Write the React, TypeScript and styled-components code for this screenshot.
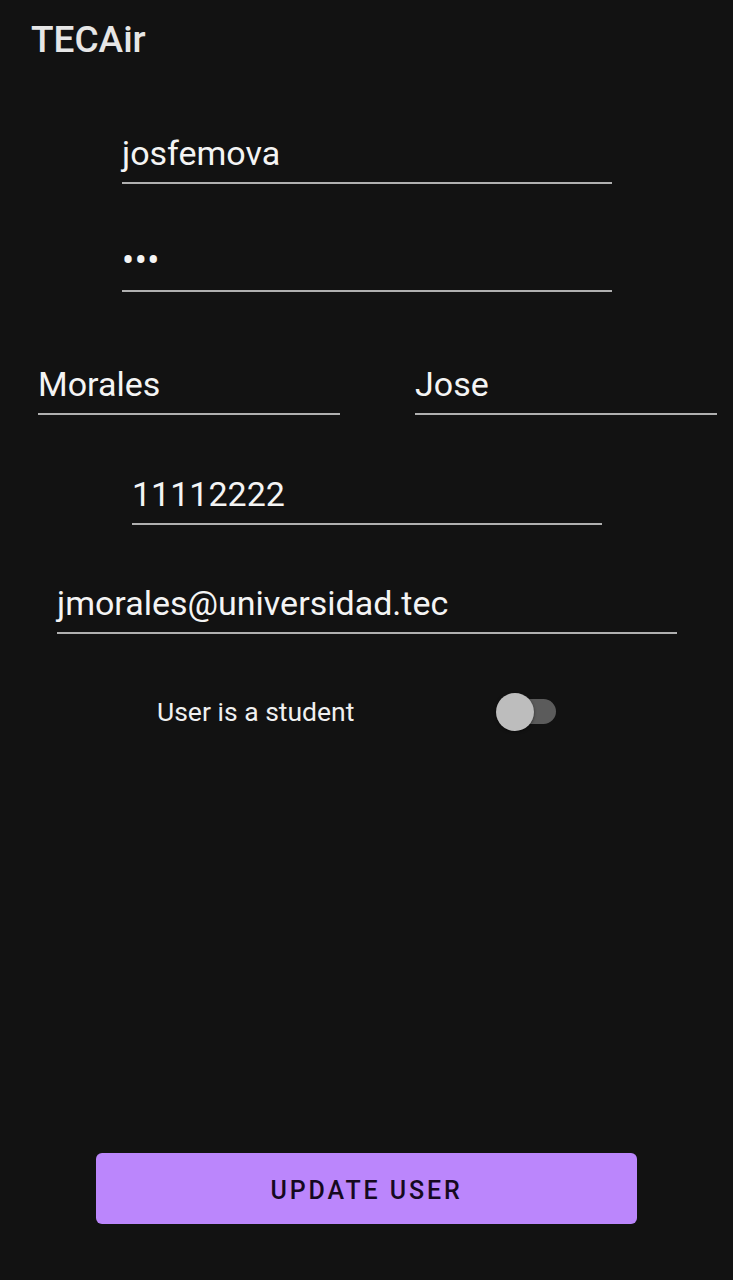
import React from "react";
import styled, { createGlobalStyle } from "styled-components";

const Global = createGlobalStyle`
  html, body { margin: 0; padding: 0; background: #121212; }
  body { font-family: Roboto, "Noto Sans", sans-serif; }
  * { box-sizing: border-box; }
`;

const Screen = styled.div`
  width: 733px;
  min-height: 1280px;
  background: #121212;
  display: flex;
  flex-direction: column;
`;

const Title = styled.h1`
  margin: 0;
  padding: 18px 0 0 31px;
  font-size: 37px;
  line-height: 44px;
  font-weight: 500;
  color: #e6e6e6;
`;

const Form = styled.div`
  display: flex;
  flex-direction: column;
  padding-top: 71px;
`;

const Field = styled.div<{ $left: number; $width: number; $gap: number }>`
  margin-left: ${(p) => p.$left}px;
  margin-top: ${(p) => p.$gap}px;
  width: ${(p) => p.$width}px;
  height: 51px;
  padding-bottom: 9px;
  border-bottom: 2px solid #b0b0b0;
  font-size: 34px;
  line-height: 40px;
  color: #f4f4f4;
  white-space: nowrap;
`;

const Dots = styled.span`
  letter-spacing: 0.5px;
  font-size: 36px;
`;

const NameRow = styled.div`
  display: flex;
  gap: 75px;
  margin-top: 72px;
  margin-left: 38px;
`;

const NameField = styled.div`
  width: 302px;
  height: 51px;
  padding-bottom: 9px;
  border-bottom: 2px solid #b0b0b0;
  font-size: 34px;
  line-height: 40px;
  color: #f4f4f4;
`;

const SwitchRow = styled.div`
  margin-top: 62px;
  margin-left: 157px;
  width: 399px;
  height: 31px;
  display: flex;
  align-items: center;
  justify-content: space-between;
`;

const SwitchLabel = styled.span`
  font-size: 26.5px;
  line-height: 31px;
  color: #f0f0f0;
`;

const Switch = styled.div`
  position: relative;
  width: 60px;
  height: 38px;
  display: flex;
  align-items: center;
  justify-content: flex-end;
`;

const Track = styled.div`
  width: 52px;
  height: 25px;
  border-radius: 13px;
  background: #5b5b5b;
`;

const Thumb = styled.div`
  position: absolute;
  left: 0;
  top: 0;
  width: 38px;
  height: 38px;
  border-radius: 50%;
  background: #bdbdbd;
  box-shadow: 0 1px 3px rgba(0, 0, 0, 0.5);
`;

const Spacer = styled.div`
  flex: 1;
`;

const Button = styled.button`
  align-self: flex-start;
  margin: 0 0 56px 96px;
  width: 541px;
  height: 71px;
  padding: 4px 0 0;
  border: none;
  border-radius: 6px;
  background: #bb86fc;
  color: #16091f;
  font-family: Roboto, "Noto Sans", sans-serif;
  font-size: 25px;
  font-weight: 500;
  letter-spacing: 2.9px;
  text-transform: uppercase;
`;

export default function App() {
  return (
    <Screen>
      <Global />
      <Title>TECAir</Title>
      <Form>
        <Field $left={122} $width={490} $gap={0}>josfemova</Field>
        <Field $left={122} $width={490} $gap={57}>
          <Dots>•••</Dots>
        </Field>
        <NameRow>
          <NameField>Morales</NameField>
          <NameField>Jose</NameField>
        </NameRow>
        <Field $left={132} $width={470} $gap={59}>11112222</Field>
        <Field $left={57} $width={620} $gap={58}>jmorales@universidad.tec</Field>
        <SwitchRow>
          <SwitchLabel>User is a student</SwitchLabel>
          <Switch>
            <Track />
            <Thumb />
          </Switch>
        </SwitchRow>
      </Form>
      <Spacer />
      <Button>Update User</Button>
    </Screen>
  );
}
